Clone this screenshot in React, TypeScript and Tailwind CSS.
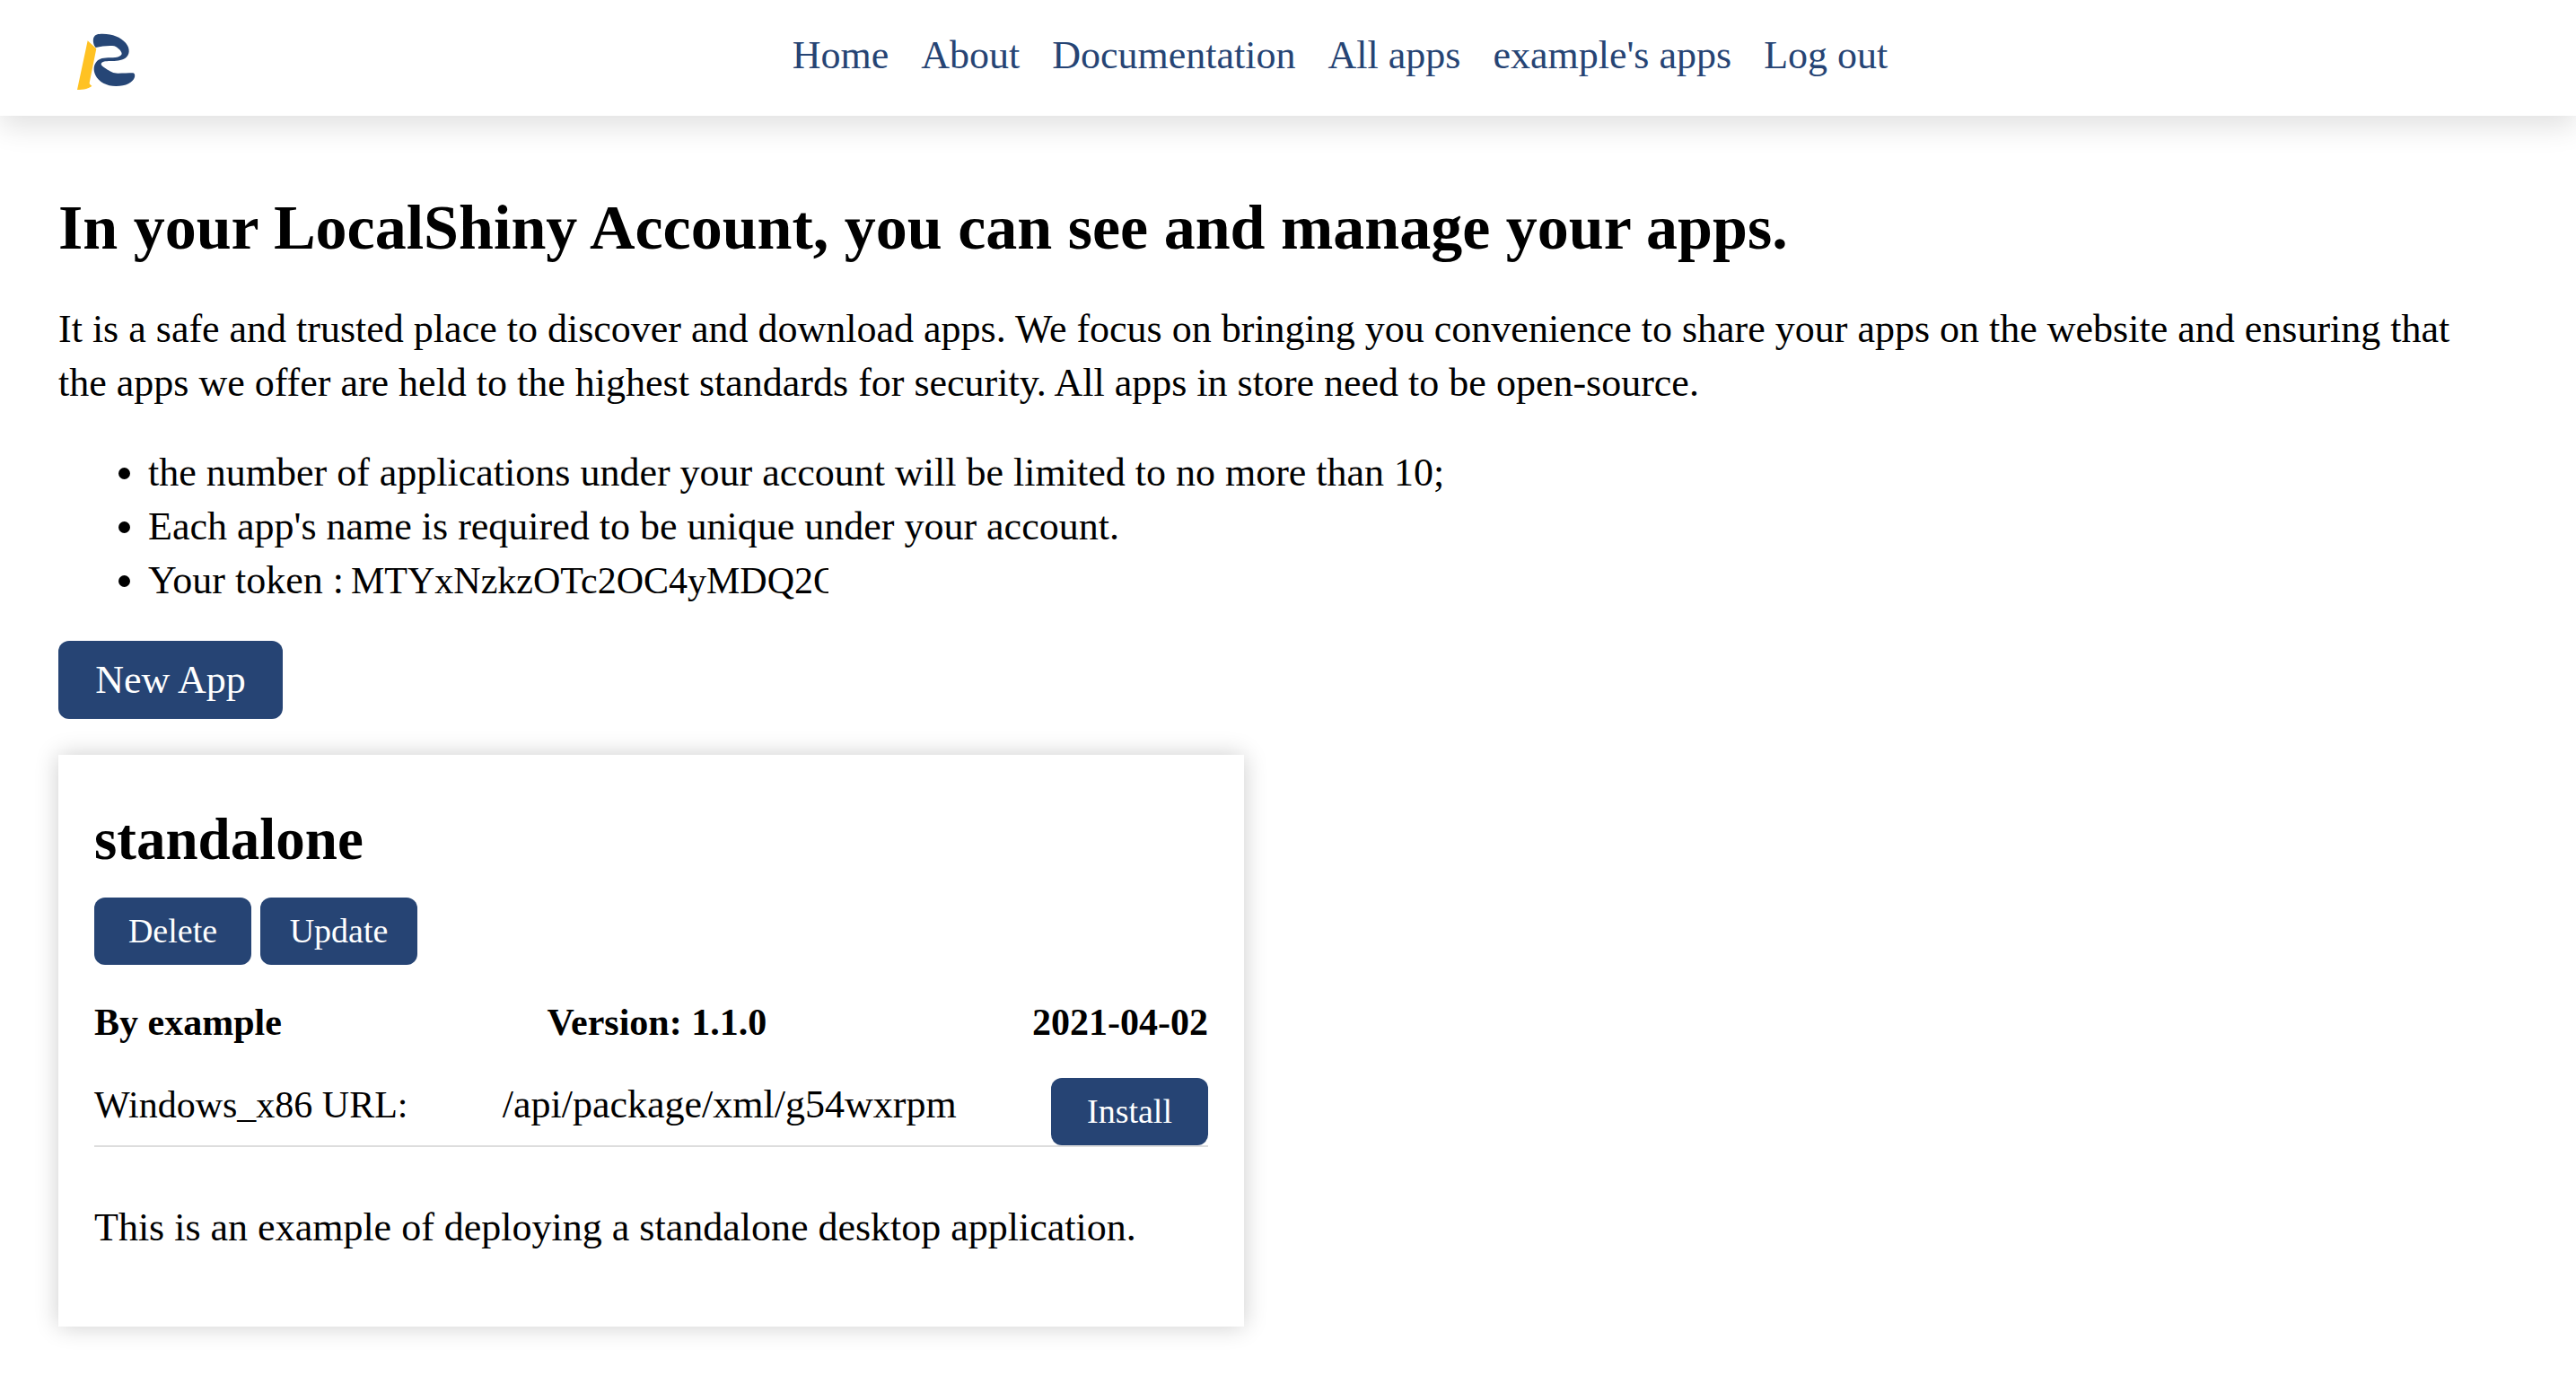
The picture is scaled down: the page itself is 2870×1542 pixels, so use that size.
import React from "react";

const links = ["Home", "About", "Documentation", "All apps", "example's apps", "Log out"];

const smallButton =
  "h-[75px] w-[175px] cursor-pointer rounded-[12px] bg-[#264474] text-center text-[38px] leading-[75px] text-white";

function Logo() {
  return (
    <svg viewBox="72 78 204 198" className="block h-[66px] w-[68px]" aria-hidden="true">
      <path
        fill="#ffc223"
        d="M113 106L142 133L119 247C119 252 123 255 127 257C119 265 101 270 78 270Z"
      />
      <path
        fill="#264676"
        d="M140 129C132 121 129 104 134 94C138 85 147 83 163 83C198 83 222 94 240 113C256 132 254 154 239 164C225 173 207 174 188 174C174 174 160 176 158 183C157 188 164 193 172 198C190 210 198 215 214 215C232 215 250 214 263 214C270 214 272 221 270 228C264 246 241 258 208 258C176 258 150 243 139 221C131 204 133 188 142 177C152 165 166 163 190 163C212 163 225 158 227 150C227 142 216 130 202 124C187 121 160 124 140 129Z"
      />
    </svg>
  );
}

export default function App() {
  return (
    <div className="min-h-screen bg-white font-['Liberation_Serif',serif] text-[44px] leading-[60px] text-black">
      <header className="flex h-[129px] items-center bg-white pr-9 pl-[84px] shadow-[0_12px_30px_rgba(0,0,0,0.12)]">
        <a href="#home" aria-label="LocalShiny" className="pt-2">
          <Logo />
        </a>
        <nav className="flex flex-1 justify-center gap-9 pb-1.5 text-[#264474]">
          {links.map((label) => (
            <a key={label} href="#" className="whitespace-nowrap">
              {label}
            </a>
          ))}
        </nav>
      </header>

      <main className="px-[65px] pt-20">
        <h1 className="text-[70px] leading-[90px] font-bold">
          In your LocalShiny Account, you can see and manage your apps.
        </h1>
        <p className="mt-[38px] pr-10">
          It is a safe and trusted place to discover and download apps. We focus on bringing you
          convenience to share your apps on the website and ensuring that the apps we offer are held
          to the highest standards for security. All apps in store need to be open-source.
        </p>
        <ul className="mt-10 list-disc pl-[100px]">
          <li>the number of applications under your account will be limited to no more than 10;</li>
          <li>Each app's name is required to be unique under your account.</li>
          <li>
            <div className="flex">
              <label htmlFor="token" className="mr-2">
                Your token :
              </label>
              <input
                id="token"
                readOnly
                defaultValue="MTYxNzkzOTc2OC4yMDQ2OTk"
                className="w-[532px] bg-transparent text-[42px] outline-none"
              />
            </div>
          </li>
        </ul>

        <button
          type="button"
          className="mt-[37px] block h-[87px] w-[250px] cursor-pointer rounded-[12px] bg-[#264474] text-white"
        >
          New App
        </button>

        <article className="mt-10 w-[1321px] max-w-full bg-white px-10 pt-[54px] pb-20 shadow-[0_0_25px_rgba(0,0,0,0.2)]">
          <h2 className="text-[65px] leading-[80px] font-bold">standalone</h2>
          <div className="mt-[25px] flex gap-[10px]">
            <button type="button" className={smallButton}>
              Delete
            </button>
            <button type="button" className={smallButton}>
              Update
            </button>
          </div>
          <div className="mt-[34px] flex justify-between text-[42px] font-bold">
            <span>By example</span>
            <span>Version: 1.1.0</span>
            <span>2021-04-02</span>
          </div>
          <div className="mt-8 flex justify-between border-b-2 border-[#dddddd]">
            <span className="text-[42px]">Windows_x86 URL:</span>
            <span>/api/package/xml/g54wxrpm</span>
            <button type="button" className={smallButton}>
              Install
            </button>
          </div>
          <p className="mt-[60px]">This is an example of deploying a standalone desktop application.</p>
        </article>
      </main>
    </div>
  );
}
